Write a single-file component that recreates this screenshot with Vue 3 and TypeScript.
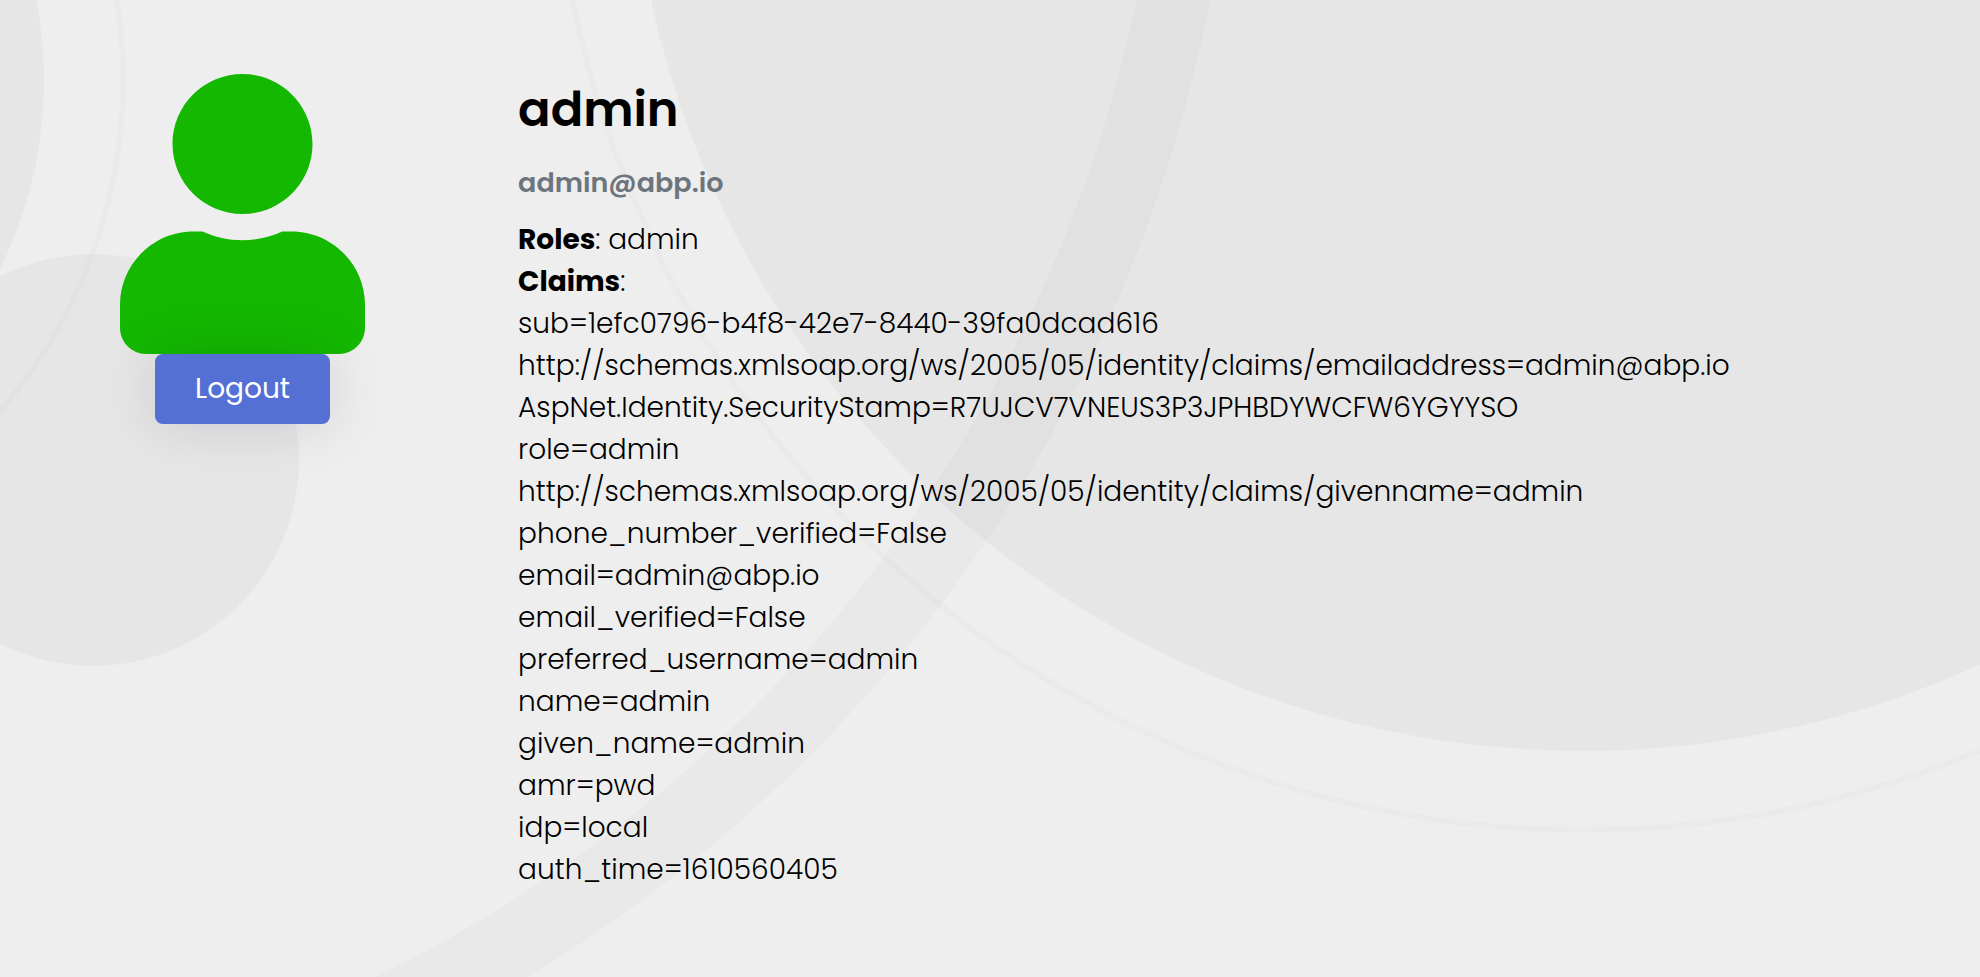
<script setup lang="ts">
interface Profile {
  name: string
  email: string
  roles: string[]
  claims: string[]
}

const profile: Profile = {
  name: 'admin',
  email: 'admin@abp.io',
  roles: ['admin'],
  claims: [
    'sub=1efc0796-b4f8-42e7-8440-39fa0dcad616',
    'http://schemas.xmlsoap.org/ws/2005/05/identity/claims/emailaddress=admin@abp.io',
    'AspNet.Identity.SecurityStamp=R7UJCV7VNEUS3P3JPHBDYWCFW6YGYYSO',
    'role=admin',
    'http://schemas.xmlsoap.org/ws/2005/05/identity/claims/givenname=admin',
    'phone_number_verified=False',
    'email=admin@abp.io',
    'email_verified=False',
    'preferred_username=admin',
    'name=admin',
    'given_name=admin',
    'amr=pwd',
    'idp=local',
    'auth_time=1610560405',
  ],
}
</script>

<template>
  <div class="page">
    <svg class="backdrop" viewBox="0 0 1980 977" preserveAspectRatio="xMinYMin slice" aria-hidden="true">
      <circle class="disc" cx="1583" cy="-203" r="954" />
      <circle class="ring" cx="1583" cy="-200" r="1030" />
      <circle class="disc" cx="-385" cy="80" r="429" />
      <circle class="ring" cx="-385" cy="80" r="508" />
      <circle class="disc" cx="93" cy="460" r="206" />
      <path
        class="band"
        fill-rule="evenodd"
        d="M-1697-279a1467 1467 0 1 0 2934 0a1467 1467 0 1 0-2934 0zM-1655-291a1411 1411 0 1 0 2822 0a1411 1411 0 1 0-2822 0z"
      />
    </svg>

    <main class="profile">
      <aside class="identity">
        <svg class="avatar" viewBox="0 0 448 512" role="img" aria-label="User">
          <path
            d="M224 256c70.7 0 128-57.3 128-128S294.7 0 224 0 96 57.3 96 128s57.3 128 128 128zm89.6 32h-16.7c-22.2 10.2-46.9 16-72.9 16s-50.6-5.8-72.9-16h-16.7C60.2 288 0 348.2 0 422.4V464c0 26.5 21.5 48 48 48h352c26.5 0 48-21.5 48-48v-41.6c0-74.2-60.2-134.4-134.4-134.4z"
          />
        </svg>
        <button class="logout" type="button">Logout</button>
      </aside>

      <section class="details">
        <h1 class="name">{{ profile.name }}</h1>
        <h2 class="email">{{ profile.email }}</h2>
        <p class="line"><strong>Roles</strong>: {{ profile.roles.join(', ') }}</p>
        <p class="line"><strong>Claims</strong>:</p>
        <ul class="claims">
          <li v-for="claim in profile.claims" :key="claim" class="line">{{ claim }}</li>
        </ul>
      </section>
    </main>
  </div>
</template>

<style>
body {
  margin: 0;
  background: #eee;
}
</style>

<style scoped>
.page {
  position: relative;
  min-height: 100vh;
  overflow: hidden;
  box-sizing: border-box;
  color: #000;
  font-family: Poppins, Inter, sans-serif;
  font-size: 28px;
  font-weight: 300;
  line-height: 42px;
}

.backdrop {
  position: absolute;
  inset: 0;
  width: 100%;
  height: 100%;
}

.disc {
  fill: rgba(0, 0, 0, 0.03);
}

.ring {
  fill: none;
  stroke: rgba(0, 0, 0, 0.014);
  stroke-width: 6;
}

.band {
  fill: rgba(0, 0, 0, 0.02);
}

.profile {
  position: relative;
  display: grid;
  grid-template-columns: 24.5% minmax(0, 1fr);
  column-gap: 33px;
  padding: 74px 0;
}

.identity {
  display: flex;
  flex-direction: column;
  align-items: center;
}

.avatar {
  display: block;
  height: 280px;
  fill: #14b800;
}

.logout {
  padding: 14px 40px;
  border: 0;
  border-radius: 8px;
  background: #5470d4;
  box-shadow: 0 0 60px rgba(16, 16, 48, 0.13);
  color: #fff;
  font: inherit;
  font-weight: 400;
  cursor: pointer;
}

.name {
  margin: 6px 0 22px;
  font-size: 48px;
  font-weight: 600;
  line-height: 60px;
}

.email {
  margin: 0 0 15px;
  color: #6c757d;
  font-size: 27px;
  font-weight: 600;
  line-height: 42px;
}

.line {
  margin: 0;
  overflow-wrap: anywhere;
}

.line strong {
  font-weight: 700;
}

.claims {
  margin: 0;
  padding: 0;
  list-style: none;
}
</style>
